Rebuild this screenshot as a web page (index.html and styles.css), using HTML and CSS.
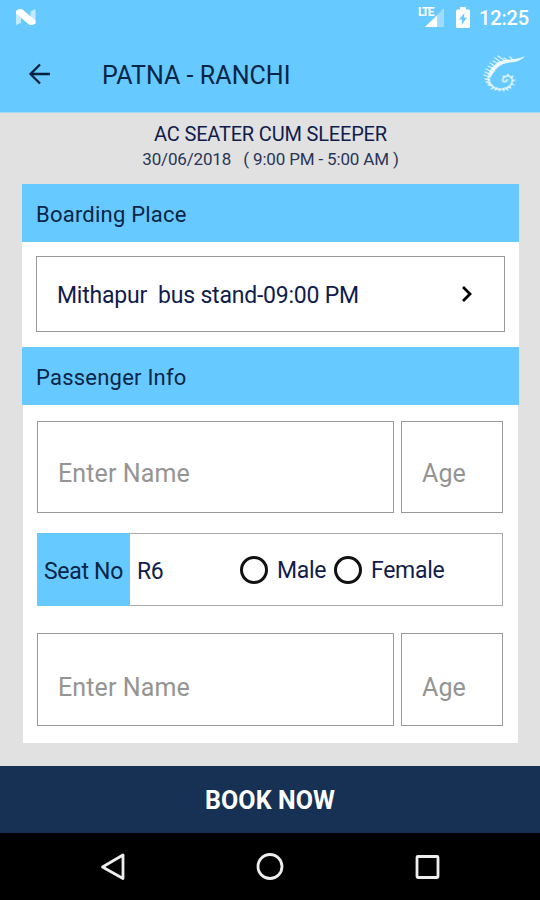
FILE: index.html
```
<!DOCTYPE html>
<html lang="en">
<head>
<meta charset="utf-8">
<title>Patna - Ranchi</title>
<link rel="stylesheet" href="styles.css">
</head>
<body>
<div class="screen">
  <header class="top">
    <div class="status">
      <svg class="n-logo" width="22" height="18" viewBox="0 0 22 18"><path d="M1 4l5-2.500v13.500l-5 2zM15.500 3.500l5-2.500v14l-5 2z" fill="#c3e9ff"/><path d="M1 3Q4 .2 7.500 1.500L20.500 12.500V15.500Q17 18 14 16.500L1 5.500z" fill="#fff"/></svg>
      <svg class="signal" width="28" height="24" viewBox="0 0 28 24"><path d="M25 2v19H6z" fill="#a0dcff"/><path d="M18 9.500v11.500H6z" fill="#fff"/></svg>
      <span class="lte">LTE</span>
      <svg class="battery" width="14" height="22" viewBox="0 0 14 22"><path d="M4 0h6v2.500h2.500Q14 2.500 14 4v15.500Q14 21 12.500 21h-11Q0 21 0 19.500V4q0-1.500 1.500-1.500H4z" fill="#fff"/><path d="M8.500 6L3 12.500h3.200L5.500 18 11 10.500H7.800z" fill="#66c9ff"/></svg>
      <span class="clock">12:25</span>
    </div>
    <div class="appbar">
      <svg class="back" width="24" height="24" viewBox="0 0 24 24"><path d="M23 12H3M13 2.500L3.500 12l9.500 9.500" fill="none" stroke="#06223f" stroke-width="2.300"/></svg>
      <h1 class="title">PATNA - RANCHI</h1>
      <svg class="brand" width="44" height="42" viewBox="0 0 44 42" fill="none" stroke="#fff" stroke-linecap="round">
        <path d="M43 3C39 8 34 9 28 9.500C21 10.500 16 13 12 19L8 25C7 18 11 12 17 9C24 5 33 8 43 3z" fill="#fff" stroke="none" opacity=".85"/>
        <path d="M12 14C5 20 5 29 10 33C15 38 24 37 28 33C32 29 31 24 27 23C23 22 20 25 21 28Q23 30 25 27" stroke-width="2.300" opacity=".6"/>
        <path d="M31 7l-3-3M26 8l-4-3M23 8l-7-5M20 10l-7-5M17 11L11 8M14 14L8 10M12 16L6 13M10 19L4 16M9 22l-6-3M8 24l-6-2M8 27l-5-1M8 30l-4-1M10 32l-4 0M12 34l-3 2M15 35l-2 2M18 36l-1 2M21 36l1 2M24 35l2 2M26 34l3 1M29 31l3 1M30 28l3-1M29 25l2-2M26 23l0-2M23 24l-2-1" stroke-width="1.300" opacity=".75"/>
      </svg>
    </div>
  </header>
  <main class="content">
    <div class="trip">
      <div class="trip-type"><span>AC SEATER CUM SLEEPER</span></div>
      <div class="trip-time"><span>30/06/2018 &nbsp; ( 9:00 PM - 5:00 AM )</span></div>
    </div>
    <h2 class="section">Boarding Place</h2>
    <div class="boarding">
      <div class="place">
        <span class="place-name">Mithapur &nbsp;bus stand-09:00 PM</span>
        <svg width="12" height="18" viewBox="0 0 12 18"><path d="M2 2l7 7-7 7" fill="none" stroke="#000" stroke-width="2.800"/></svg>
      </div>
    </div>
    <h2 class="section">Passenger Info</h2>
    <div class="passengers">
      <div class="row"><div class="field name"><span>Enter Name</span></div><div class="field age"><span>Age</span></div></div>
      <div class="seat">
        <div class="seat-label">Seat No</div>
        <div class="seat-no">R6</div>
        <span class="radio"></span><span class="male">Male</span>
        <span class="radio"></span><span class="female">Female</span>
      </div>
      <div class="row last"><div class="field name"><span>Enter Name</span></div><div class="field age"><span>Age</span></div></div>
    </div>
  </main>
  <div class="book"><span>BOOK NOW</span></div>
  <nav class="nav">
    <svg width="28" height="30" viewBox="0 0 28 30"><path d="M24 3v23.500L3.500 15z" fill="none" stroke="#eee" stroke-width="2.800" stroke-linejoin="round"/></svg>
    <svg width="28" height="30" viewBox="0 0 28 30"><circle cx="14" cy="14.500" r="12" fill="none" stroke="#eee" stroke-width="2.800"/></svg>
    <svg width="28" height="30" viewBox="0 0 28 30"><rect x="4" y="4.500" width="21" height="21" rx="1" fill="none" stroke="#eee" stroke-width="2.800"/></svg>
  </nav>
</div>
</body>
</html>
```
FILE: styles.css
```
* { box-sizing: border-box; }
body { margin: 0; font-family: Roboto, sans-serif; color: #101c4c; }
.screen { width: 540px; height: 900px; display: flex; flex-direction: column; background: #e1e1e1; overflow: hidden; white-space: nowrap; }
svg { display: block; flex: none; }
.top { height: 113px; background: #66c9ff; border-bottom: 1px solid #a5daf5; flex: none; }
.status { height: 36px; display: flex; align-items: flex-start; padding-left: 15px; position: relative; color: #fff; }
.n-logo { margin-top: 8px; }
.signal { margin: 6px 0 0 382px; }
.lte { position: absolute; left: 418px; top: 6px; font-size: 12px; line-height: 13px; font-weight: 700; letter-spacing: -1.4px; }
.battery { margin: 7px 0 0 9px; }
.clock { margin: 6px 0 0 9px; font-size: 20px; line-height: 24px; font-weight: 500; letter-spacing: -0.15px; }
.appbar { height: 76px; display: flex; align-items: center; padding-left: 27px; }
.back { margin-top: -1px; }
.title { margin: 3px 0 0 51px; width: 380px; font-size: 25px; line-height: 30px; font-weight: 400; letter-spacing: 0.05px; color: #0a2547; }
.content { height: 653px; flex: none; padding: 0 21px 0 22px; }
.trip { height: 71px; padding-top: 8px; text-align: center; }
.trip-type { font-size: 20px; line-height: 26px; letter-spacing: -0.18px; }
.trip-time { font-size: 17px; line-height: 24px; letter-spacing: -0.16px; color: #2a3556; }
.section { margin: 0; height: 58px; background: #66c9ff; padding: 2px 0 0 14px; font-size: 22px; line-height: 58px; font-weight: 400; letter-spacing: 0.22px; color: #0a2547; }
.boarding { height: 105px; background: #fff; padding: 14px; }
.place { height: 76px; border: 1px solid #999; display: flex; align-items: center; justify-content: space-between; padding: 0 31px 0 20px; font-size: 23px; letter-spacing: -0.21px; }
.place-name { padding-top: 2px; }
.passengers { margin: 0 1px; height: 338px; background: #fff; padding: 16px 15px 0 14px; }
.row { display: flex; gap: 7px; height: 92px; }
.field { border: 1px solid #999; padding: 37px 0 0 20px; font-size: 25px; line-height: 30px; letter-spacing: 0.12px; color: #949494; }
.name { width: 357px; }
.age { width: 102px; }
.last { height: 93px; }
.last .field { padding-top: 39px; }
.seat { height: 73px; margin: 20px 0 27px; border: 1px solid #aaa; border-left: 0; display: flex; align-items: center; font-size: 23px; letter-spacing: -0.3px; }
.seat-label { width: 93px; height: 73px; margin: -1px 0; line-height: 77px; padding-left: 7px; background: #66c9ff; color: #0a2547; flex: none; }
.seat-no { width: 110px; padding: 3px 0 0 7px; }
.radio { width: 28px; height: 28px; border: 3px solid #111; border-radius: 50%; flex: none; }
.male { margin-left: 9px; width: 57px; padding-top: 1px; }
.female { margin-left: 9px; padding-top: 1px; }
.book { height: 67px; background: #163154; color: #fff; text-align: center; font-size: 25px; line-height: 69px; font-weight: 700; letter-spacing: 0.1px; }
.nav { height: 67px; background: #000; display: flex; align-items: center; justify-content: space-between; padding: 0 99px; }
```
